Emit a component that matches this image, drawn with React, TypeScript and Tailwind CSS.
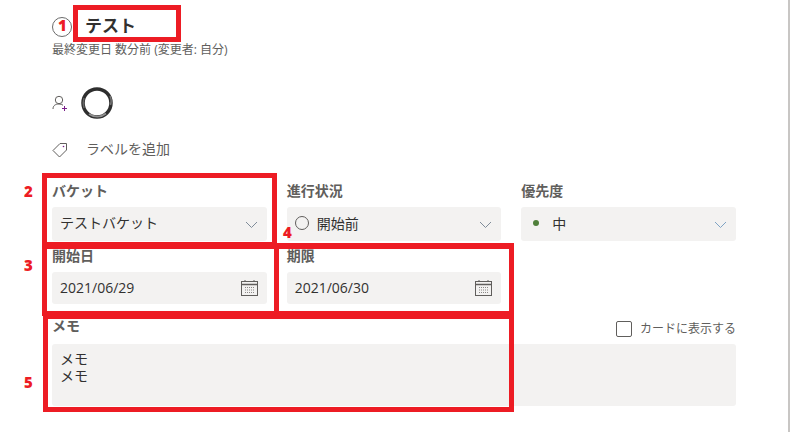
const jp = `font-['Open_Sans','Noto_Sans_CJK_JP',sans-serif]`;

function Chevron({ color = "#7f8c99" }: { color?: string }) {
  return (
    <svg width="13" height="8" viewBox="0 0 13 8" fill="none" className="mt-[2px]">
      <path d="M1 1l5.500 5.500L12 1" stroke={color} strokeWidth="1" />
    </svg>
  );
}

function CalendarIcon() {
  return (
    <svg width="17" height="16" viewBox="0 0 17 16" fill="none">
      <rect x="0.500" y="1.500" width="16" height="14" stroke="#605e5c" />
      <path d="M1 4.500h15" stroke="#605e5c" strokeWidth="1.500" />
      <path d="M4 0v2M13 0v2" stroke="#605e5c" />
      <path d="M4 7.500h9M4 10h9M4 12.500h9" stroke="#8a8886" strokeDasharray="1 1" />
    </svg>
  );
}

function Label({ children }: { children: string }) {
  return <div className="h-[25px] text-[14px] leading-[18px] font-semibold text-[#605e5c]">{children}</div>;
}

function Field({ label, children, h }: { label: string; children: React.ReactNode; h: string }) {
  return (
    <div>
      <Label>{label}</Label>
      <div className={`flex ${h} items-center justify-between rounded-[3px] bg-[#f3f2f1] pl-2 pr-[9px] text-[14px] text-[#323130]`}>
        {children}
      </div>
    </div>
  );
}

function RedBox({ className }: { className: string }) {
  return <div className={`absolute border-[5px] border-[#ed1c24] ${className}`} />;
}

function Num({ n, className }: { n: string; className: string }) {
  return (
    <span className={`absolute text-[15px] leading-[16px] font-extrabold text-[#ed1c24] ${className}`}>
      {n}
    </span>
  );
}

export default function App() {
  return (
    <div className={`relative h-[432px] w-[790px] overflow-hidden border-r-2 border-[#c8c6c4] bg-white ${jp}`}>
      <div className="w-[736px] pl-[52px]">
        <div className="flex h-[43px] items-end pb-[6px]">
          <div className="h-[20px] w-[20px] rounded-full border border-[#6b6b6b]" />
          <div className="ml-[13px] text-[17px] leading-[22px] font-bold text-[#323130]">テスト</div>
        </div>
        <div className="text-[12px] leading-[13px] text-[#605e5c]">最終変更日 数分前 (変更者: 自分)</div>

        <div className="mt-[31px] flex h-[32px] items-center">
          <svg width="16" height="17" viewBox="0 0 16 17" fill="none">
            <circle cx="7" cy="5" r="3.700" stroke="#605e5c" />
            <path d="M1 14c0-3.500 2.500-5 6-5 1.600 0 3 .4 4 1.200" stroke="#605e5c" />
            <path d="M12.500 11v5M10 13.500h5" stroke="#7a1f8a" />
          </svg>
          <svg width="32" height="32" viewBox="0 0 32 32" fill="none" className="ml-[13px]">
            <circle cx="16" cy="16" r="14" stroke="#2e2e2e" strokeWidth="3.500" />
            <path d="M8 27c5 3.500 12 3.500 17-.5" stroke="#8f8f8f" strokeWidth="1.800" />
            <path d="M29 9c1.500 3 1.500 6 .5 9" stroke="#777" strokeWidth="1.500" />
            <path d="M3 11c-1 3-1 7 0 10" stroke="#666" strokeWidth="1.500" />
          </svg>
        </div>

        <div className="mt-[20px] flex h-[18px] items-center">
          <svg width="16" height="16" viewBox="0 0 16 16" fill="none" className="mt-[3px]">
            <path d="M1 8.500 8 1.500h6.500v6.500L7.500 15z" stroke="#605e5c" />
            <circle cx="11.500" cy="4.500" r="0.800" fill="#7a1f8a" />
          </svg>
          <span className="ml-[18px] text-[14px] text-[#605e5c]">ラベルを追加</span>
        </div>

        <div className="mt-[25px] grid grid-cols-3 gap-x-[20px] gap-y-[6px]">
          <Field label="バケット" h="h-[34px]">
            <span className="-mt-[3px]">テストバケット</span>
            <Chevron />
          </Field>
          <Field label="進行状況" h="h-[34px]">
            <span className="-mt-[2px] flex items-center">
              <span className="h-[14px] w-[14px] rounded-full border border-[#605e5c]" />
              <span className="ml-[8px]">開始前</span>
            </span>
            <Chevron />
          </Field>
          <Field label="優先度" h="h-[34px]">
            <span className="-mt-[2px] flex items-center">
              <span className="ml-[4px] h-[6px] w-[6px] rounded-full bg-[#4f7f3a]" />
              <span className="ml-[13px]">中</span>
            </span>
            <Chevron color="#7fa3c4" />
          </Field>
          <Field label="開始日" h="h-[32px]">
            <span className="-mt-[1px]">2021/06/29</span>
            <CalendarIcon />
          </Field>
          <Field label="期限" h="h-[32px]">
            <span className="-mt-[1px]">2021/06/30</span>
            <CalendarIcon />
          </Field>
        </div>

        <div className="mt-[13px] flex h-[27px] items-start justify-between">
          <Label>メモ</Label>
          <div className="flex items-center pt-[4px]">
            <span className="h-[16px] w-[16px] rounded-[2px] border border-[#605e5c]" />
            <span className="ml-[8px] text-[12px] leading-[16px] text-[#605e5c]">カードに表示する</span>
          </div>
        </div>
        <div className="h-[62px] rounded-[3px] bg-[#f3f2f1] px-2 pt-[6px] text-[14px] leading-[17px] text-[#323130]">
          <div>メモ</div>
          <div>メモ</div>
        </div>
      </div>

      <RedBox className="top-[5px] left-[73px] h-[37px] w-[108px]" />
      <RedBox className="top-[173px] left-[42px] h-[74px] w-[235px]" />
      <RedBox className="top-[244px] left-[42px] h-[72px] w-[237px]" />
      <RedBox className="top-[243px] left-[274px] h-[73px] w-[240px] border-t-[6px]" />
      <RedBox className="top-[314px] left-[43px] h-[98px] w-[471px]" />

      <Num n="1" className="top-[17px] left-[58px]" />
      <Num n="2" className="top-[183px] left-[24px]" />
      <Num n="3" className="top-[257px] left-[24px]" />
      <Num n="4" className="top-[224px] left-[283px]" />
      <Num n="5" className="top-[374px] left-[24px]" />
    </div>
  );
}
